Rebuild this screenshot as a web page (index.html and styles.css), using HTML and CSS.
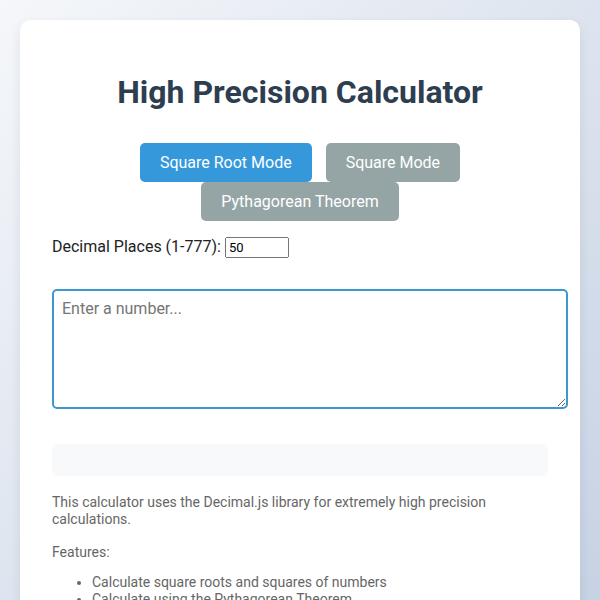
FILE: index.html
```html
<!DOCTYPE html>
<html lang="en">
<head>
  <meta charset="UTF-8">
  <meta name="viewport" content="width=device-width, initial-scale=1.0">
  <title>High Precision Calculator</title>
  <link rel="stylesheet" href="styles.css">
</head>
<body>
  <div class="container">
    <h1>High Precision Calculator</h1>

    <div class="mode-selector">
      <button class="mode-btn active" data-mode="sqrt">Square Root Mode</button>
      <button class="mode-btn" data-mode="square">Square Mode</button>
      <button class="mode-btn" data-mode="pythagoras">Pythagorean Theorem</button>
    </div>

    <div class="precision-row">
      <label for="precision">Decimal Places (1-777):</label>
      <input type="number" id="precision" min="1" max="777" value="50">
    </div>

    <textarea id="numberInput" placeholder="Enter a number..."></textarea>

    <div id="result" class="result"></div>

    <div class="info">
      <p>This calculator uses the Decimal.js library for extremely high precision calculations.</p>
      <p class="features">Features:</p>
      <ul>
        <li>Calculate square roots and squares of numbers</li>
        <li>Calculate using the Pythagorean Theorem</li>
        <li>Up to 777 decimal places of precision</li>
      </ul>
    </div>
  </div>

  <script>
    const modeButtons = document.querySelectorAll('.mode-btn');
    const input = document.getElementById('numberInput');
    const result = document.getElementById('result');
    const precision = document.getElementById('precision');
    let mode = 'sqrt';

    modeButtons.forEach(btn => {
      btn.addEventListener('click', () => {
        modeButtons.forEach(b => b.classList.remove('active'));
        btn.classList.add('active');
        mode = btn.dataset.mode;
        input.placeholder = mode === 'pythagoras' ? 'Enter a and b, separated by a comma...' : 'Enter a number...';
        calculate();
      });
    });

    function calculate() {
      const places = Math.min(Math.max(parseInt(precision.value) || 1, 1), 20);
      const text = input.value.trim();
      if (!text) {
        result.textContent = '';
        return;
      }
      let value;
      if (mode === 'sqrt') {
        value = Math.sqrt(parseFloat(text));
      } else if (mode === 'square') {
        value = parseFloat(text) ** 2;
      } else {
        const [a, b] = text.split(',').map(parseFloat);
        value = Math.sqrt(a * a + b * b);
      }
      result.textContent = isNaN(value) ? 'Invalid input' : value.toFixed(places);
    }

    input.addEventListener('input', calculate);
    precision.addEventListener('input', calculate);
  </script>
</body>
</html>
```

FILE: styles.css
```css
body {
  font-family: Roboto, "Liberation Sans", sans-serif;
  margin: 0;
  padding: 20px;
  min-height: 100vh;
  box-sizing: border-box;
  background: linear-gradient(135deg, #f5f7fa 0%, #c3cfe2 100%);
  color: #222;
}
.container {
  background: #fff;
  border-radius: 10px;
  padding: 32px;
  box-shadow: 0 4px 12px rgba(0,0,0,0.08);
}
h1 {
  font-size: 32px;
  text-align: center;
  color: #2c3e50;
  margin: 21px 0 32px;
}
.mode-selector {
  text-align: center;
  margin-bottom: 16px;
}
.mode-btn {
  font-family: inherit;
  font-size: 16px;
  padding: 10px 20px;
  margin: 0 5px;
  background: #95a5a6;
  color: white;
  border: none;
  border-radius: 5px;
  cursor: pointer;
}
.mode-btn.active {
  background: #3498db;
}
.precision-row {
  font-size: 16px;
  margin-bottom: 31px;
}
#precision {
  width: 56px;
  font-family: inherit;
  font-size: 13px;
}
textarea {
  display: block;
  width: 100%;
  height: 100px;
  padding: 8px;
  font-family: inherit;
  font-size: 16px;
  border: 2px solid #3d97d3;
  border-radius: 5px;
  margin: 0 0 35px;
  outline: none;
}
.result {
  background: #f8f9fa;
  border-radius: 5px;
  padding: 16px;
  margin-bottom: 18px;
  word-break: break-all;
}
.info {
  font-size: 14px;
  line-height: 1.2;
  color: #666;
}
.info p {
  margin: 0 0 16px;
}
.info p.features {
  margin-bottom: 0;
}
.info ul {
  margin: 14px 0;
  padding-left: 40px;
}
```
